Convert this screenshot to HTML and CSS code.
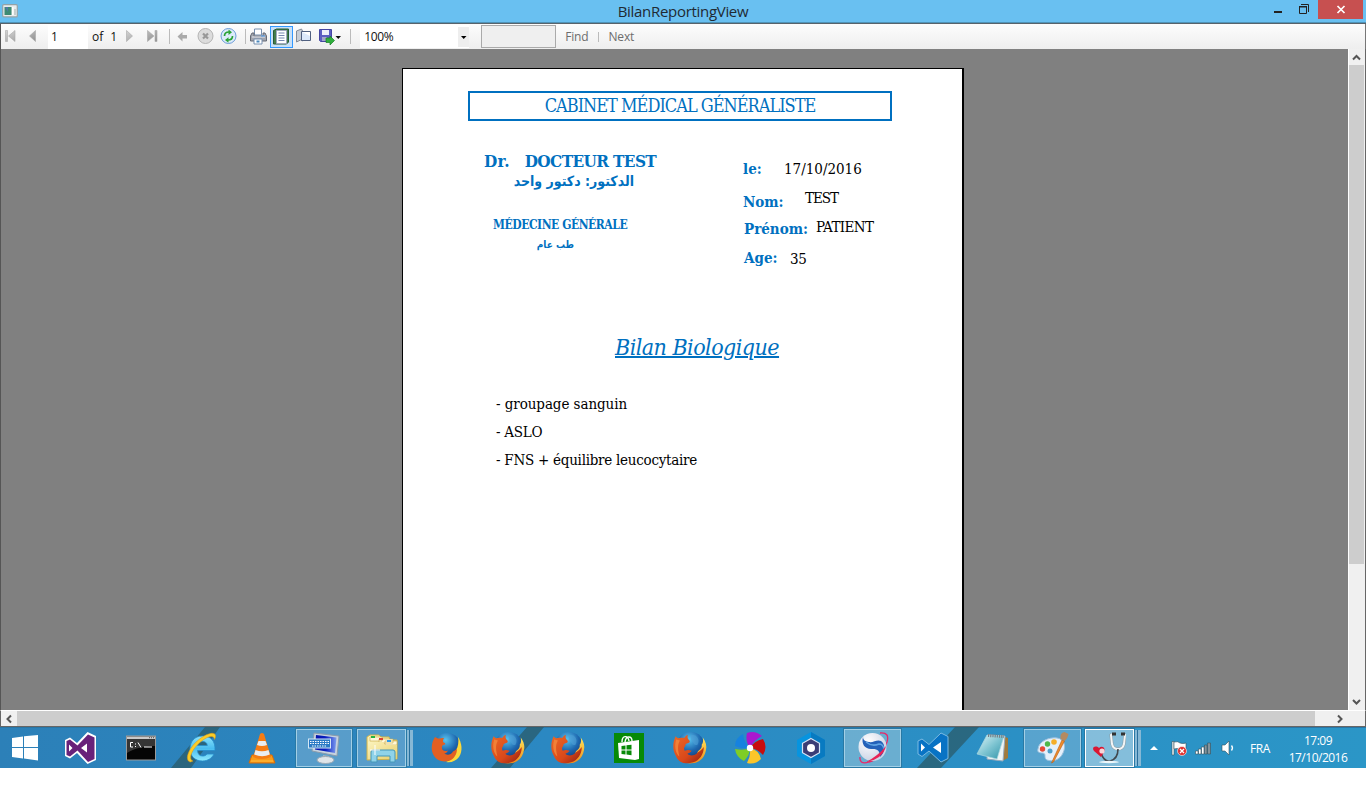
FILE: index.html
```html
<!DOCTYPE html>
<html lang="fr">
<head>
<meta charset="utf-8">
<title>BilanReportingView</title>
<link rel="stylesheet" href="styles.css">
</head>
<body>
<svg class="defs" width="0" height="0">
  <defs>
    <linearGradient id="gray" x1="0" y1="0" x2="1" y2="1"><stop offset="0" stop-color="#d5d5d5"/><stop offset="1" stop-color="#8f8f8f"/></linearGradient>
    <radialGradient id="globe" cx=".45" cy=".25" r=".8"><stop offset="0" stop-color="#58c3ee"/><stop offset=".5" stop-color="#1d66ae"/><stop offset="1" stop-color="#102c63"/></radialGradient>
    <linearGradient id="fox" x1="0" y1="0" x2="1" y2="1"><stop offset="0" stop-color="#ec6a28"/><stop offset=".6" stop-color="#d9481a"/><stop offset="1" stop-color="#8e1d10"/></linearGradient>
    <linearGradient id="tail" x1="0" y1="0" x2="0" y2="1"><stop offset="0" stop-color="#ffe65a"/><stop offset="1" stop-color="#ee8a1b"/></linearGradient>
    <linearGradient id="ie" x1="0" y1="0" x2="0" y2="1"><stop offset="0" stop-color="#8be3fb"/><stop offset=".5" stop-color="#49bdf0"/><stop offset="1" stop-color="#8fe9fd"/></linearGradient>
    <linearGradient id="screen" x1="0" y1="0" x2="1" y2="0"><stop offset="0" stop-color="#0310a8"/><stop offset=".5" stop-color="#0a1fc0"/><stop offset="1" stop-color="#7e9df0"/></linearGradient>
    <linearGradient id="pad" x1="0" y1="0" x2="1" y2="1"><stop offset="0" stop-color="#e2f6f8"/><stop offset=".5" stop-color="#7fc5d2"/><stop offset="1" stop-color="#2f93a8"/></linearGradient>
    <linearGradient id="folder" x1="0" y1="0" x2="1" y2="1"><stop offset="0" stop-color="#fbf3bd"/><stop offset="1" stop-color="#e8cf6c"/></linearGradient>
    <radialGradient id="ball" cx=".35" cy=".3" r=".8"><stop offset="0" stop-color="#fff"/><stop offset="1" stop-color="#c5cfe2"/></radialGradient>
    <symbol id="firefox" viewBox="0 0 32 32">
      <circle cx="16.500" cy="14.500" r="13.500" fill="url(#globe)"/>
      <path d="M17 4q4-1 6 2 2 3 0 7-3 1-4-2-3-3-2-7z" fill="#4f9fd6" opacity=".6"/>
      <path d="M28 6c3 4 4 8 3 12-1.500 8-7 12.500-15 12.500-3 0-6-1-8-2.500 8 0 14-3 15.500-9 3-2 4-4 3.500-6 1.500-2 1.500-4 1-7z" fill="url(#tail)"/>
      <path d="M2.500 5c1 1.500 2 2 4 1.700 1.200-.4 2.500-.5 4-.2 1-1.300 2-2.500 3.500-3-.6 2-.4 3.600 1 5 1 .8 1 1.800 0 2.500-2 .5-3.500 1-3.500 3-1.500 1.300-1.300 3-.5 4.500 2.200-.8 4.200-1 6.500.2-1 2-3 2.300-4 2.800 2.500 2.500 7 2 10-1.500 2-1 4-3 5.500-5 0 7-4 12.500-10 14.500-8 2.500-14 0-16.500-6.500C-.5 18-.5 11 2.500 5z" fill="url(#fox)"/>
      <path d="M3 8c-2 7-.5 13 3 16C4.500 18 4 13 6.500 9z" fill="#f58a3c" opacity=".8"/>
    </symbol>
  </defs>
</svg>
<div class="window">
  <header class="titlebar">
    <svg class="app-icon" width="16" height="14" viewBox="0 0 16 14"><rect x=".7" y=".7" width="14.600" height="12.200" rx="1" fill="#e8ecec" stroke="#93a3a8" stroke-width="1.200"/><path d="M2.500 3h7v8h-7z" fill="#3d8b73"/><path d="M3 3h3v5z" fill="#4f78a6"/><path d="M10 3h1.500v8H10z" fill="#fff"/><path d="M12 5h2v6h-2z" fill="#c7cfcd"/></svg>
    <h1 class="title">BilanReportingView</h1>
    <div class="controls">
      <svg width="54" height="20" viewBox="0 0 54 20" fill="none"><path d="M11 12h8" stroke="#222" stroke-width="2"/><path d="M36.500 6v7.500h7V6M36 6.500h8" stroke="#222"/><path d="M36 6h8v1.500h-8z" fill="#222"/><path d="M38 4.500h7.500V12" stroke="#222"/></svg>
      <div class="close"><svg width="10" height="9" viewBox="0 0 10 9"><path d="M1.500 1l7 7M8.500 1l-7 7" stroke="#fff" stroke-width="1.700"/></svg></div>
    </div>
  </header>
  <nav class="toolbar">
    <svg width="48" height="25" viewBox="1 0 48 25" fill="url(#gray)" stroke="#a9a9a9" stroke-width=".6"><path d="M5.500 6.500h2v11h-2zM15 6.500v11l-6.500-5.500zM35.500 6.500v11L29.500 12z"/></svg>
    <span class="page-input">1</span><span class="of">of</span><span class="count">1</span>
    <svg width="52" height="25" viewBox="-2 0 52 25" fill="url(#gray)" stroke="#a9a9a9" stroke-width=".6"><path d="M7.500 6.500v11l6-5.500zM28.500 6.500v11l6.500-5.500zM36 6.500h2v11h-2z"/></svg>
    <i class="sep"></i>
    <svg class="nav-icons" width="74" height="25" viewBox="0 0 74 25"><path d="M7.500 12.500l5-4.500v3h4.500v3.500h-4.500v3z" fill="#aaa"/><circle cx="35.500" cy="12" r="7.500" fill="#dcdcdc" stroke="#b4b4b4"/><path d="M33 9.500l5 5M38 9.500l-5 5" stroke="#999" stroke-width="2.200"/><circle cx="58.500" cy="12" r="7.500" fill="#dcebfa" stroke="#6c9cd8"/><path d="M54.500 12c0-3 2-4 4.500-4M62.500 12c0 3-2 4-4.500 4" stroke="#2aa336" stroke-width="1.700" fill="none"/><path d="M58.500 5.500l3.500 2.700-3.500 2.700zM58.500 13.200v5.500L55 16z" fill="#2aa336"/></svg>
    <i class="sep print-sep"></i>
    <svg class="print" width="20" height="25" viewBox="3 0 20 25"><path d="M7.500 5h7v6h-7z" fill="#fff" stroke="#7790b0"/><path d="M5 9l-1.500 3V17h16v-5L18 9h-2v3H7V9z" fill="#a2a5ae" stroke="#666b76"/><path d="M5 13h13" stroke="#e2e6ee"/><path d="M7 15h8v5H7z" fill="#fff" stroke="#7790b0"/><path d="M14 12h4" stroke="#4a9cf0"/><path d="M9.500 17.500h3" stroke="#4b88bd" stroke-width="2"/></svg>
    <span class="active-tool"><svg width="21" height="20" viewBox="0 0 21 20"><path d="M2.500 3.500l3-1.500h12v13l-2 2h-13z" fill="#447c4c" stroke="#285b35"/><path d="M5.500 3.500h10v13h-10z" fill="#fff" stroke="#a0a7bd"/><path d="M7.500 6h6M7.500 8.500h6M7.500 11h6M7.500 13.500h6" stroke="#7687b0"/></svg></span>
    <svg class="setup" width="18" height="25" viewBox="0 0 18 25"><path d="M1.500 7l5-2 1 2v10l-2-1-4 2z" fill="#c8ced6" stroke="#858d99"/><path d="M6.500 7.500h9v9h-9z" fill="#dce9fb" stroke="#506080"/><path d="M7 8h8v4z" fill="#fff"/></svg>
    <svg class="save" width="30" height="25" viewBox="2 0 30 25"><path d="M3.500 5.500h12v12h-11l-1-1z" fill="#5c5ec1" stroke="#4546a2"/><path d="M6 6h7v5H6z" fill="#eef0fa"/><path d="M6 13h5v4H6z" fill="#a4a6c9"/><path d="M10 14h4v-2l4.500 4.500L14 21v-2.500h-4z" fill="#2fae3c" stroke="#177e25" stroke-width=".7"/><path d="M19.500 12h5.500l-2.700 3z" fill="#111"/></svg>
    <i class="sep zoom-sep"></i>
    <div class="zoom"><span>100%</span><b><svg width="11" height="20" viewBox="0 0 11 20"><path d="M3 9h5.500L5.700 12z"/></svg></b></div>
    <span class="search"></span><span class="find">Find</span><i class="sep small"></i><span class="next">Next</span>
  </nav>
  <main class="viewer">
    <div class="canvas">
      <article class="report">
        <h2 class="cabinet"><span>CABINET MÉDICAL GÉNÉRALISTE</span></h2>
        <div class="heading">
          <section class="doctor">
            <p class="dr"><span>Dr.</span><span class="dr-name">DOCTEUR TEST</span></p>
            <p class="dr-ar" lang="ar" dir="rtl">الدكتور: دكتور واحد</p>
            <p class="spec">MÉDECINE GÉNÉRALE</p>
            <p class="spec-ar" lang="ar" dir="rtl">طب عام</p>
          </section>
          <section class="patient">
            <p class="row date"><b>le:</b><span>17/10/2016</span></p>
            <p class="row nom"><b>Nom:</b><span>TEST</span></p>
            <p class="row prenom"><b>Prénom:</b><span>PATIENT</span></p>
            <p class="row age"><b>Age:</b><span>35</span></p>
          </section>
        </div>
        <h3 class="bilan">Bilan Biologique</h3>
        <div class="exams">
          <p class="exam-a">- groupage sanguin</p>
          <p class="exam-b">- ASLO</p>
          <p class="exam-c">- FNS + équilibre leucocytaire</p>
        </div>
      </article>
    </div>
    <div class="vscroll"><svg width="17" height="16" viewBox="0 0 17 16"><path d="M5 10.500l3.500-3.500 3.500 3.500" class="arrow"/></svg><i></i><svg width="17" height="16" viewBox="0 0 17 16"><path d="M5 6l3.500 3.500L12 6" class="arrow"/></svg></div>
  </main>
  <div class="hscroll"><svg width="16" height="16" viewBox="0 0 16 16"><path d="M10 4.500L6.500 8l3.500 3.500" class="arrow"/></svg><i></i><svg width="16" height="16" viewBox="0 0 16 16"><path d="M6 4.500L9.500 8 6 11.500" class="arrow"/></svg></div>
</div>
<footer class="taskbar">
  <svg class="streaks" width="1366" height="41" viewBox="0 0 1366 41" fill="#2b5b69" fill-opacity=".75"><path d="M171 41L205 0h15l-29 41zM491 41L527 0h17l-34 41zM917 41L955 0h24l-38 41z"/></svg>
  <div class="start"><svg width="28" height="28" viewBox="0 0 28 28" fill="#fff"><path d="M1 4l11-1.500V13H1zM13 2.300L27 1v12H13zM1 14h11v10.500L1 23zM13 14h14v12.500l-14-2z"/></svg></div>
  <div class="task"><svg width="34" height="34" viewBox="0 0 34 34"><path d="M2 9l5-2.500 7 5.500L24.500 1 33 5v24l-8.500 4L14 22l-7 5.500L2 25z" fill="#fff"/><path d="M3.500 10L7 8.500l7.500 6L25 3.500l6.500 3V28L25 31l-10.500-11.500-7.500 6L3.500 24zM6 13.500v7l3.500-3.500zm18-1L18 17l6 4.500z" fill="#68217a" fill-rule="evenodd"/></svg></div>
  <div class="task"><svg width="32" height="28" viewBox="0 0 32 28"><rect x="1.500" y="2" width="29" height="24" fill="#050505" stroke="#9a9a9a"/><path d="M2 2.500h28v2.500H2z" fill="#c9c9c9"/><path d="M24 3.700h5" stroke="#555" stroke-dasharray="1 1"/><path d="M2 5h28v7C20 12 10 14 2 19z" fill="#555" opacity=".6"/><path d="M8 8.500H5.500v4.500H8M10.500 9.500v1M10.500 12v1M13 8.500l3 5M19 13h8" stroke="#fff" fill="none"/></svg></div>
  <div class="task"><svg width="34" height="34" viewBox="0 0 34 34"><path d="M17.500 5C9 5 5 11 5 18c0 7 5 12 12.500 12 5.500 0 9.500-3 11.500-7h-7c-1 1.500-2.500 2-4.500 2-3 0-4.800-2-5-5.500H30C30.500 10 26 5 17.500 5zM12.500 14.500c.7-3 2.500-4 5-4s4.500 1 4.800 4z" fill="url(#ie)" stroke="#268cc9" stroke-width=".8"/><path d="M5.500 31C-1 30 3 17 14 8.500 22 2 30 .5 30.500 4.500c.2 1.200-.2 2.500-1 4C29.500 5 25 4 18 9 8 16 2 28 8 30z" fill="#fccc27" stroke="#de9811" stroke-width=".5"/></svg></div>
  <div class="task vlc"><svg width="28" height="32" viewBox="0 0 28 32"><path d="M4 23h20l3 8H1z" fill="#f99b18" stroke="#d86b06"/><path d="M12 2q2-2 4 0l7 23q-9 4-18 0z" fill="#f47c14"/><path d="M10.500 9h7l1.500 4q-5 2-10 0zM7.500 18q6.500 2.500 13 0l1.300 4.500q-7.500 3.300-15.600 0z" fill="#e9edf1"/><path d="M3 29h22" stroke="#ffbf42"/></svg></div>
  <div class="task open first-open"><svg width="34" height="34" viewBox="0 0 34 34"><path d="M7 2l25 3-2 20-25-5z" fill="#c5d2de" stroke="#899bac"/><path d="M9 4l20.500 2.500L28 22 8 18.500z" fill="url(#screen)"/><path d="M16 24l6 1v3h-6z" fill="#aab4be"/><ellipse cx="18.500" cy="29" rx="8.500" ry="3.500" fill="#dfe4e8" stroke="#9ba8b3"/><rect x="1.500" y="8" width="22" height="9" fill="#2b7bc5" stroke="#d5e8f5"/><path d="M3 10.500h19M3 12.500h19M5 15h15" stroke="#fff" stroke-dasharray="1.500 1"/></svg></div>
  <div class="task open stack explorer"><svg width="34" height="32" viewBox="0 0 34 32"><path d="M2 5l3-2h9l2 2h8l1 3h7v19l-30 1z" fill="url(#folder)" stroke="#d0b34b"/><path d="M5 5h12v4H5zM14 7h14v4H14zM20 9h12v4H20z" fill="#fff8d9" stroke="#c9ab4a" stroke-width=".6"/><path d="M3 10h15l2 3h12v14H3z" fill="url(#folder)"/><path d="M6 4h4v2H6z" fill="#25b540"/><path d="M14 6h4v2h-4z" fill="#df4632"/><path d="M22 8h4v2h-4z" fill="#2d9ae8"/><path d="M6 30V20q0-2 2-2h20q2 0 2 2v10h-5v-6H12v6z" fill="#8fd3e9" stroke="#4497b9"/><path d="M10 13v10M5 18h10" stroke="#fff"/></svg></div>
  <div class="task"><svg width="32" height="32" viewBox="0 0 32 32"><circle cx="16" cy="15" r="14" fill="url(#globe)"/><path d="M27 5c4 6 5 14 1 20-3 4-8 6-13 5 7-3 10-7 10-12 2-3 3-8 2-13z" fill="#fbd83a"/><path d="M4 5c1.500 1 3 1.700 4.500 1.500 1.500-.7 3-.7 4.500-.5-1 1.500-1.500 3-.5 4.500 1.500.3 2 1 1.500 2-2 .5-3.500 1-3 3-.5 3 3 4.500 6 3-1 2.500-3 3-4 3 3 2 7 1.500 9-2 2-1 3-2 4-3 0 6-3 10-7 12-6 2-13 1-16.500-5.500C-.5 18 .5 10 4 5z" fill="#e25f22"/></svg></div>
  <div class="task"><svg width="34" height="34"><use href="#firefox" width="34" height="34"/></svg></div>
  <div class="task"><svg width="34" height="34"><use href="#firefox" width="34" height="34"/></svg></div>
  <div class="task"><svg width="30" height="30" viewBox="0 0 30 30"><path d="M0 0h30v30H0z" fill="#078a07"/><path d="M4 10l21-3v19l-4 1-16-2z" fill="#fff"/><path d="M8 9c0-7 6-7 7-1M11 9c1-7 7-6 7-1" fill="none" stroke="#fff" stroke-width="1.400"/><path d="M7.500 13l4-.5v4h-4zM12.500 12.300l5-.6v4.800h-5zM7.500 17.500h4v4l-4-.5zM12.500 17.500h5v4.700l-5-.6z" fill="#078a07"/></svg></div>
  <div class="task"><svg width="34" height="34"><use href="#firefox" width="34" height="34"/></svg></div>
  <div class="task"><svg width="34" height="34" viewBox="0 0 34 34"><path d="M17 17Q12 10 14 2q8-3 15 3-7 3-12 12z" fill="#a917cf"/><path d="M17 17q4-7 13-9 5 8 0 16-5-6-13-7z" fill="#c80d0d"/><path d="M17 17q9 2 11 11-6 6-14 4 4-7 3-15z" fill="#fbc52a"/><path d="M17 17q0 7-6 13-8-4-9-12 9 2 15-1z" fill="#7fcd26"/><path d="M17 17Q9 18 2 15 2 7 10 3q1 9 7 14z" fill="#1682df"/><circle cx="17" cy="17" r="3.200" fill="#fff"/></svg></div>
  <div class="task"><svg width="32" height="34" viewBox="0 0 32 34"><path d="M16 1l14 8v16l-14 8-14-8V9z" fill="#0794df"/><path d="M16 1v32l14-8V9z" fill="#087ac1"/><path d="M16 7.500l8.500 4.800v9.400L16 26.500l-8.500-4.800v-9.400z" fill="#3b3d75" stroke="#d6e4f5" stroke-width="1.200"/><circle cx="16" cy="17" r="4" fill="#fff"/></svg></div>
  <div class="task open light"><svg width="34" height="34" viewBox="0 0 34 34"><path d="M24 2q10-1 7 9-6 17-18 20-10 3-9-5" fill="none" stroke="#e7296a" stroke-width="1.300"/><circle cx="16.500" cy="16" r="14" fill="url(#ball)"/><path d="M7 6c-2 7 2 12 8 12 6-.5 9 1 9 8 5-4 6-13 1-16-4-2-8 2-12 1-4-.5-6-2-6-5z" fill="#2462b9"/><path d="M10 11q6 5 13 2 4 0 5 5" fill="none" stroke="#5fa4e4" stroke-width="1.500"/><path d="M30 15Q27 28 10 31 22 25 30 15z" fill="#e82356"/></svg></div>
  <div class="task code"><svg width="34" height="34" viewBox="0 0 34 34"><path d="M2 10l4-2 7 5.500L25 2l7 3.500v22L25 31 13 20l-7 5.500L2 23z" fill="#0873c4" stroke="#7bbae2"/><path d="M5 12.500v8l4-4zM25 11l-8 5.500 8 5.500z" fill="#fff"/></svg></div>
  <div class="task notepad"><svg width="34" height="34" viewBox="0 0 34 34"><path d="M30 6l3 1v20l-6 3z" fill="#a07a3c"/><path d="M13 4l17 1-2 25-16-2z" fill="#eef5f5" stroke="#9ab"/><path d="M12 4l17 1-7 23L2 23z" fill="url(#pad)" stroke="#abd7df" stroke-width=".7"/><path d="M13 4.500l16 1" stroke="#777e85" stroke-width="3" stroke-dasharray="1.200 1"/></svg></div>
  <div class="task open"><svg width="34" height="34" viewBox="0 0 34 34"><path d="M3 18C4 10 14 6 22 7c8 1 9 9 6 15-3 7-10 9-16 7-4-2 0-6-4-7-4 0-6-1-5-4z" fill="#e5f0fb" stroke="#9ec1dd"/><circle cx="7.500" cy="18" r="2.700" fill="#e64a38"/><circle cx="12.500" cy="13" r="2.700" fill="#50b84a"/><circle cx="19" cy="11" r="2.800" fill="#f5ae28"/><circle cx="15" cy="20" r="2.500" fill="#4e9fcc"/><path d="M27 9l2.500 1-11 21-2 1z" fill="#ef8c2b" stroke="#ba5d12" stroke-width=".6"/><path d="M25.500 8q-1-6 4-7l4 2q-1 5-4 7z" fill="#b48a60"/></svg></div>
  <div class="task open stack bright"><svg width="34" height="34" viewBox="0 0 34 34"><path d="M20 3l-1 1 1 9q1 5 6 5t6-5l1-9-2-1" fill="none" stroke="#8b999f" stroke-width="3"/><path d="M20 3l-1 1 1 9q1 5 6 5t6-5l1-9-2-1" fill="none" stroke="#f1f5f6" stroke-width="2"/><path d="M20 3h4M29 3h4" stroke="#333" stroke-width="3"/><path d="M26 18q0 10-8 12-6 1-9-8" fill="none" stroke="#41484e" stroke-width="1.600"/><ellipse cx="17" cy="31" rx="10" ry="1.200" fill="#eef8fb"/><path d="M9 26l-7-6c-3-4 2-6 5-3 3-3 7 0 5 4z" fill="#d81733"/><circle cx="10" cy="20" r="2.600" fill="#f7d5d9"/></svg></div>
  <div class="tray">
    <svg width="100" height="24" viewBox="0 0 100 24"><path d="M10 14h8l-4-4z" fill="#fff"/><g stroke="#36515d" stroke-width=".6"><path d="M32 5.500h2V19h-2z" fill="#fff"/><path d="M34 6q4-1 6 1 3 1 6 0v7q-3 1-6-1-3-1-6 0z" fill="#fff"/></g><circle cx="42" cy="15" r="4.500" fill="#df302d" stroke="#fff" stroke-width=".6"/><path d="M40 13l4 4M44 13l-4 4" stroke="#fff" stroke-width="1.300"/><g stroke="#37505b" stroke-width=".6"><path d="M55.500 15h2.500v3h-2.500zM58.500 13h2.500v5h-2.500zM61.500 11h2.500v7h-2.500z" fill="#fff"/><path d="M64.500 9h2.500v9h-2.500zM67.500 7h3v11h-3z" fill="#84949c"/><path d="M82 9h3l4-4v14l-4-4h-3z" fill="#fff"/></g><path d="M91.500 9.500q2 2.500 0 5" stroke="#fff" fill="none" stroke-width="1.300"/></svg>
    <span class="lang">FRA</span>
    <div class="clock"><span>17:09</span><span class="clock-date">17/10/2016</span></div>
  </div>
</footer>
</body>
</html>
```
FILE: styles.css
```css
* { box-sizing: border-box; }
body { margin: 0; width: 1366px; height: 800px; overflow: hidden; background: #fff; font: 12px "Open Sans", "Noto Sans", sans-serif; color: #111; }
p, h1, h2, h3 { margin: 0; font-weight: 400; white-space: nowrap; }
svg { display: block; flex: none; }
.defs { position: absolute; }
.window { height: 727px; display: flex; flex-direction: column; }

.titlebar { height: 24px; background: #69c0f1; border-bottom: 1px solid #58636b; display: grid; grid-template-columns: 103px 1fr 103px; box-shadow: inset 0 -1px #4f93b8; }
.app-icon { margin: 4px 0 0 2px; }
.title { font-size: 15px; line-height: 23px; text-align: center; color: #1f2a33; letter-spacing: -.3px; }
.controls { display: flex; }
.close { width: 45px; height: 19px; background: #c75050; display: grid; place-items: center; margin-left: 1px; }

.toolbar { height: 25px; display: flex; align-items: center; background: linear-gradient(#fdfdfd, #eee); border-left: 1px solid #555; border-right: 1px solid #777; line-height: 15px; }
.toolbar span { position: relative; }
.page-input { width: 40px; height: 24px; line-height: 23px; background: #fff; padding-left: 3px; margin-left: -1px; }
.of { margin-left: 4px; }
.count { margin-left: 7px; }
.sep { width: 1px; height: 15px; background: #bbb; flex: none; }
.sep.small { height: 10px; margin-left: 10px; }
.print-sep { margin-left: 1px; }
.print { margin-left: 4px; }
.active-tool { width: 23px; height: 22px; border: 1px solid #3399ff; background: #c9e0f7; }
.setup { margin-left: 2px; }
.save { margin-left: 5px; }
.zoom-sep { margin-left: 2px; }
.zoom { width: 109px; height: 23px; background: #fff; margin-left: 9px; padding-left: 4px; display: flex; align-items: center; justify-content: space-between; letter-spacing: -.3px; }
.zoom b { background: #eee; }
.search { width: 75px; height: 23px; border: 1px solid #aaa; background: #efefef; margin-left: 12px; }
.find, .next { color: #6d6d6d; margin-left: 9px; letter-spacing: -.15px; }

.viewer { flex: 1; display: flex; min-height: 0; border-left: 1px solid #555; border-right: 1px solid #666; }
.canvas { flex: 1; background: #808080; padding: 19px 0 0 401px; overflow: hidden; }
.report { width: 562px; height: 780px; background: #fff; border: 1px solid #000; border-right-width: 2px; padding-top: 22px; color: #000; font: 15px/20px "DejaVu Serif Condensed", "DejaVu Serif", serif; font-stretch: condensed; }
.cabinet { width: 424px; height: 30px; border: 2px solid #0070c0; margin-left: 65px; color: #0070c0; font-size: 18px; line-height: 25px; text-align: center; letter-spacing: -1px; }
.heading { display: grid; grid-template-columns: 259px 1fr; margin-left: 81px; height: 210px; }
.doctor { color: #0070c0; padding-top: 30px; }
.doctor p { font-weight: 700; }
.dr { display: flex; gap: 15px; font-size: 17px; letter-spacing: -.6px; }
.dr > span:first-child { letter-spacing: .2px; }
.dr-ar { width: 150px; font: 14px/20px "DejaVu Sans Condensed", "DejaVu Sans", sans-serif; font-stretch: condensed; }
.spec { margin: 24px 0 0 9px; font-size: 12px; letter-spacing: -.46px; }
.spec-ar { width: 90px; font: 10px/20px "DejaVu Sans Condensed", "DejaVu Sans", sans-serif; font-stretch: condensed; }
.patient { padding-top: 38px; }
.row { display: flex; align-items: flex-start; height: 30px; }
.row b { color: #0070c0; }
.date b { width: 41px; }
.nom { height: 29px; }
.nom b { width: 62px; margin-top: 3px; }
.nom span { margin-top: -1px; letter-spacing: -1px; }
.prenom b { width: 72px; margin: 1px 0 0 1px; }
.prenom span { margin-top: -1px; letter-spacing: -.6px; }
.age b { width: 46px; margin-left: 1px; }
.age span { margin-top: 1px; letter-spacing: -.4px; }
.bilan { margin-left: 212px; padding-top: 1px; font-size: 23px; line-height: 30px; font-style: italic; color: #0070c0; text-decoration: underline; text-decoration-thickness: 2px; letter-spacing: -.54px; }
.exams { margin: 28px 0 0 93px; line-height: 28px; }
.exam-a { letter-spacing: -.07px; }
.exam-b, .exam-c { letter-spacing: -.26px; }
.arrow { fill: none; stroke: #555; stroke-width: 2; }
.vscroll { width: 17px; background: #f0f0f0; border-left: 1px solid #fff; display: flex; flex-direction: column; }
.vscroll svg { margin-left: -1px; }
.vscroll i { height: 499px; margin: 0 1px 0 0; background: #cdcdcd; }
.vscroll svg:last-child { margin-top: auto; }
.hscroll { height: 17px; background: #f0f0f0; border: 1px solid #666; border-top-color: #fff; display: flex; }
.hscroll i { width: 1298px; background: #cdcdcd; }
.hscroll svg:last-child { margin-left: 17px; }

.taskbar { position: relative; height: 41px; background: linear-gradient(90deg, #2c80b8, #2b88c2 40%, #2b96c7); display: flex; border-top: 1px solid #2876a6; color: #fff; }
.streaks { position: absolute; left: 0; top: -1px; }
.start { position: relative; width: 50px; padding: 6px 0 0 11px; flex: none; }
.task { position: relative; width: 58.700px; margin: 0 1px; height: 40px; display: grid; place-items: center; flex: none; }
.open { background: rgba(150, 190, 220, .42); border: 1px solid #a2cfe6; outline: 1px solid #2879a5; width: 56.700px; height: 38px; margin: 1px 2px 0; }
.first-open { margin-left: 3px; }
.light { background: rgba(170, 205, 220, .5); }
.stack { width: 49px; margin-right: 9.700px; box-shadow: 4px 0 0 -1px #86b8d5, 5px 0 0 -1px #286f9d, 8px 0 0 -1px #86b8d5; }
.explorer { margin-left: 3px; margin-right: 10.200px; }
.light { margin-left: 3px; }
.code { width: 57.200px; }
.notepad { width: 57.700px; }
.bright { background: rgba(205, 226, 236, .55); border-color: #fff; }
.tray { position: absolute; right: 0; top: 0; height: 40px; display: flex; align-items: center; width: 226px; }
.lang { width: 30px; margin-left: 10px; letter-spacing: -.4px; }
.clock { width: 80px; margin-left: -2px; display: flex; flex-direction: column; align-items: center; line-height: 17px; margin-top: 1px; letter-spacing: -.5px; }
```
